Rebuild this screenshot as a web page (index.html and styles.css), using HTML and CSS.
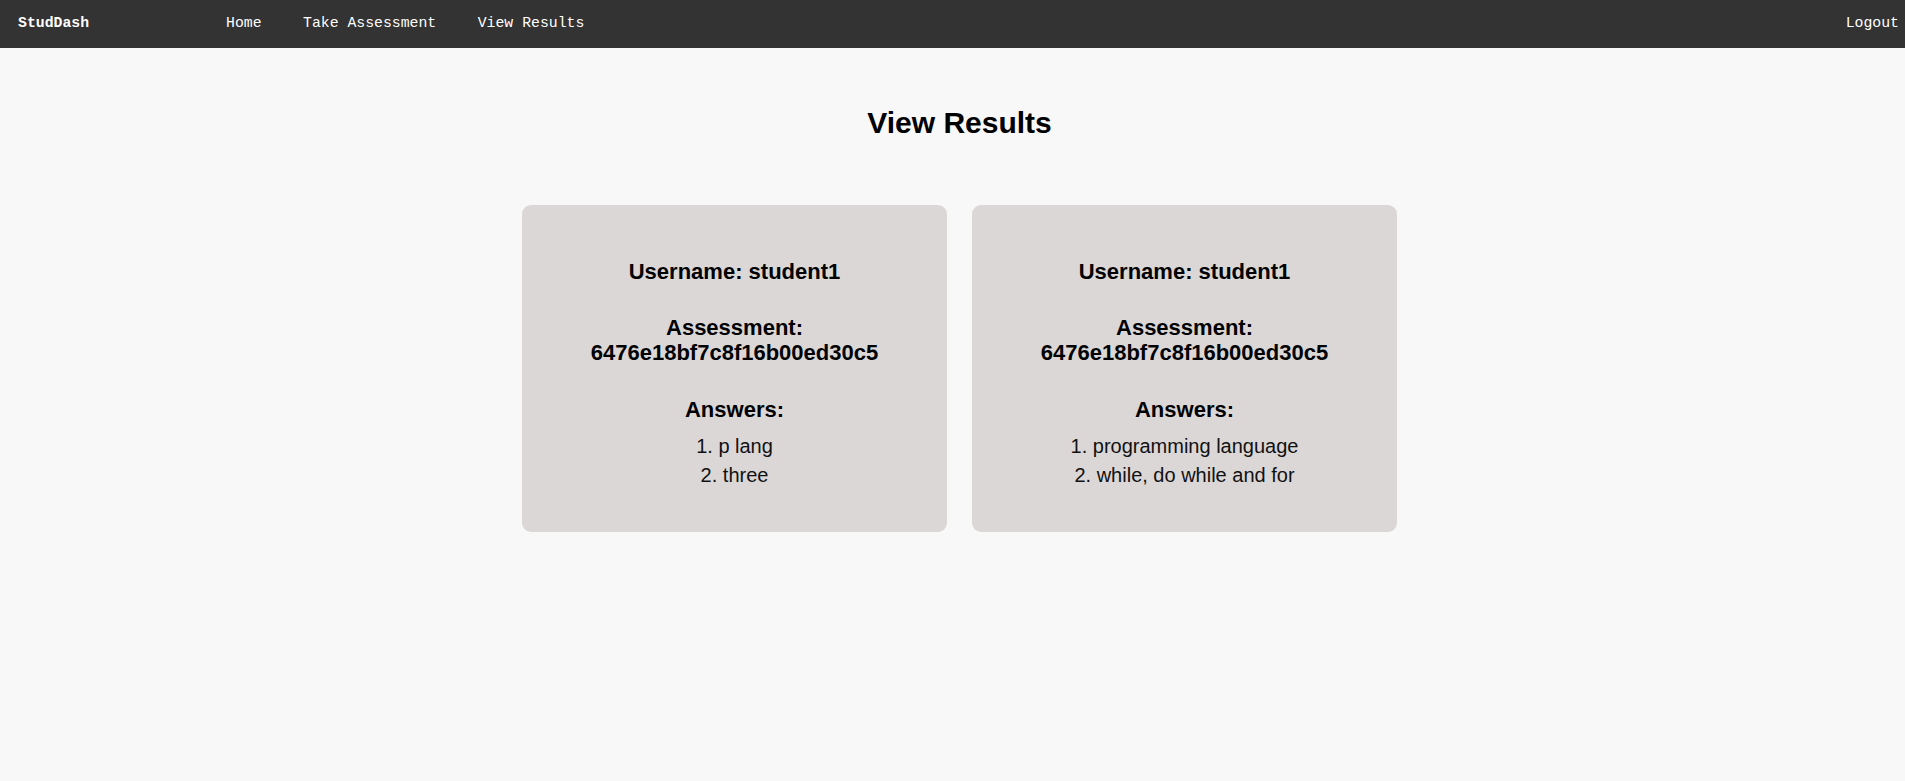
FILE: index.html
```html
<!DOCTYPE html>
<html lang="en">
<head>
<meta charset="utf-8">
<title>StudDash - View Results</title>
<link rel="stylesheet" href="styles.css">
</head>
<body>
<nav class="navbar">
  <div class="brand">StudDash</div>
  <ul class="nav-links">
    <li><a href="#">Home</a></li>
    <li><a href="#">Take Assessment</a></li>
    <li><a href="#">View Results</a></li>
  </ul>
  <a class="logout" href="#">Logout</a>
</nav>
<main class="content">
  <h1 class="page-title">View Results</h1>
  <div class="results">
    <div class="card">
      <h2 class="card-head head-user">Username: student1</h2>
      <h2 class="card-head head-assess">Assessment:<br>6476e18bf7c8f16b00ed30c5</h2>
      <h2 class="card-head head-answers">Answers:</h2>
      <ol class="answers">
        <li>p lang</li>
        <li>three</li>
      </ol>
    </div>
    <div class="card">
      <h2 class="card-head head-user">Username: student1</h2>
      <h2 class="card-head head-assess">Assessment:<br>6476e18bf7c8f16b00ed30c5</h2>
      <h2 class="card-head head-answers">Answers:</h2>
      <ol class="answers">
        <li>programming language</li>
        <li>while, do while and for</li>
      </ol>
    </div>
  </div>
</main>
</body>
</html>
```

FILE: styles.css
```css
html, body {
  margin: 0;
  padding: 0;
}
body {
  background: #f8f8f8;
  font-family: "Liberation Sans", Arial, sans-serif;
  color: #000;
  min-height: 781px;
}
.navbar {
  height: 48px;
  box-sizing: border-box;
  background: #333333;
  display: flex;
  align-items: center;
  padding: 0 6px 2px 18px;
  font-family: "Liberation Mono", "DejaVu Sans Mono", monospace;
  font-size: 14.8px;
  color: #ffffff;
}
.brand {
  font-weight: bold;
  width: 208px;
}
.nav-links {
  list-style: none;
  margin: 0;
  padding: 0;
  display: flex;
  gap: 41.5px;
  flex: 1;
}
.nav-links a,
.logout {
  color: #ffffff;
  text-decoration: none;
}
.content {
  padding: 58px 0 0 14px;
}
.page-title {
  margin: 0;
  text-align: center;
  font-size: 30px;
  font-weight: bold;
  line-height: 34.5px;
}
.results {
  display: flex;
  justify-content: center;
  gap: 25px;
  margin-top: 64.5px;
}
.card {
  width: 425px;
  box-sizing: border-box;
  background: #dbd7d6;
  border-radius: 9px;
  padding: 54px 10px 43px;
  text-align: center;
}
.card-head {
  margin: 0;
  font-size: 22px;
  line-height: 25px;
  font-weight: bold;
}
.head-user {
  margin-bottom: 31px;
}
.head-assess {
  margin-bottom: 32px;
}
.answers {
  list-style: inside decimal;
  margin: 10px 0 0;
  padding: 0;
  font-size: 20px;
  line-height: 28.5px;
  color: #111;
}
```
